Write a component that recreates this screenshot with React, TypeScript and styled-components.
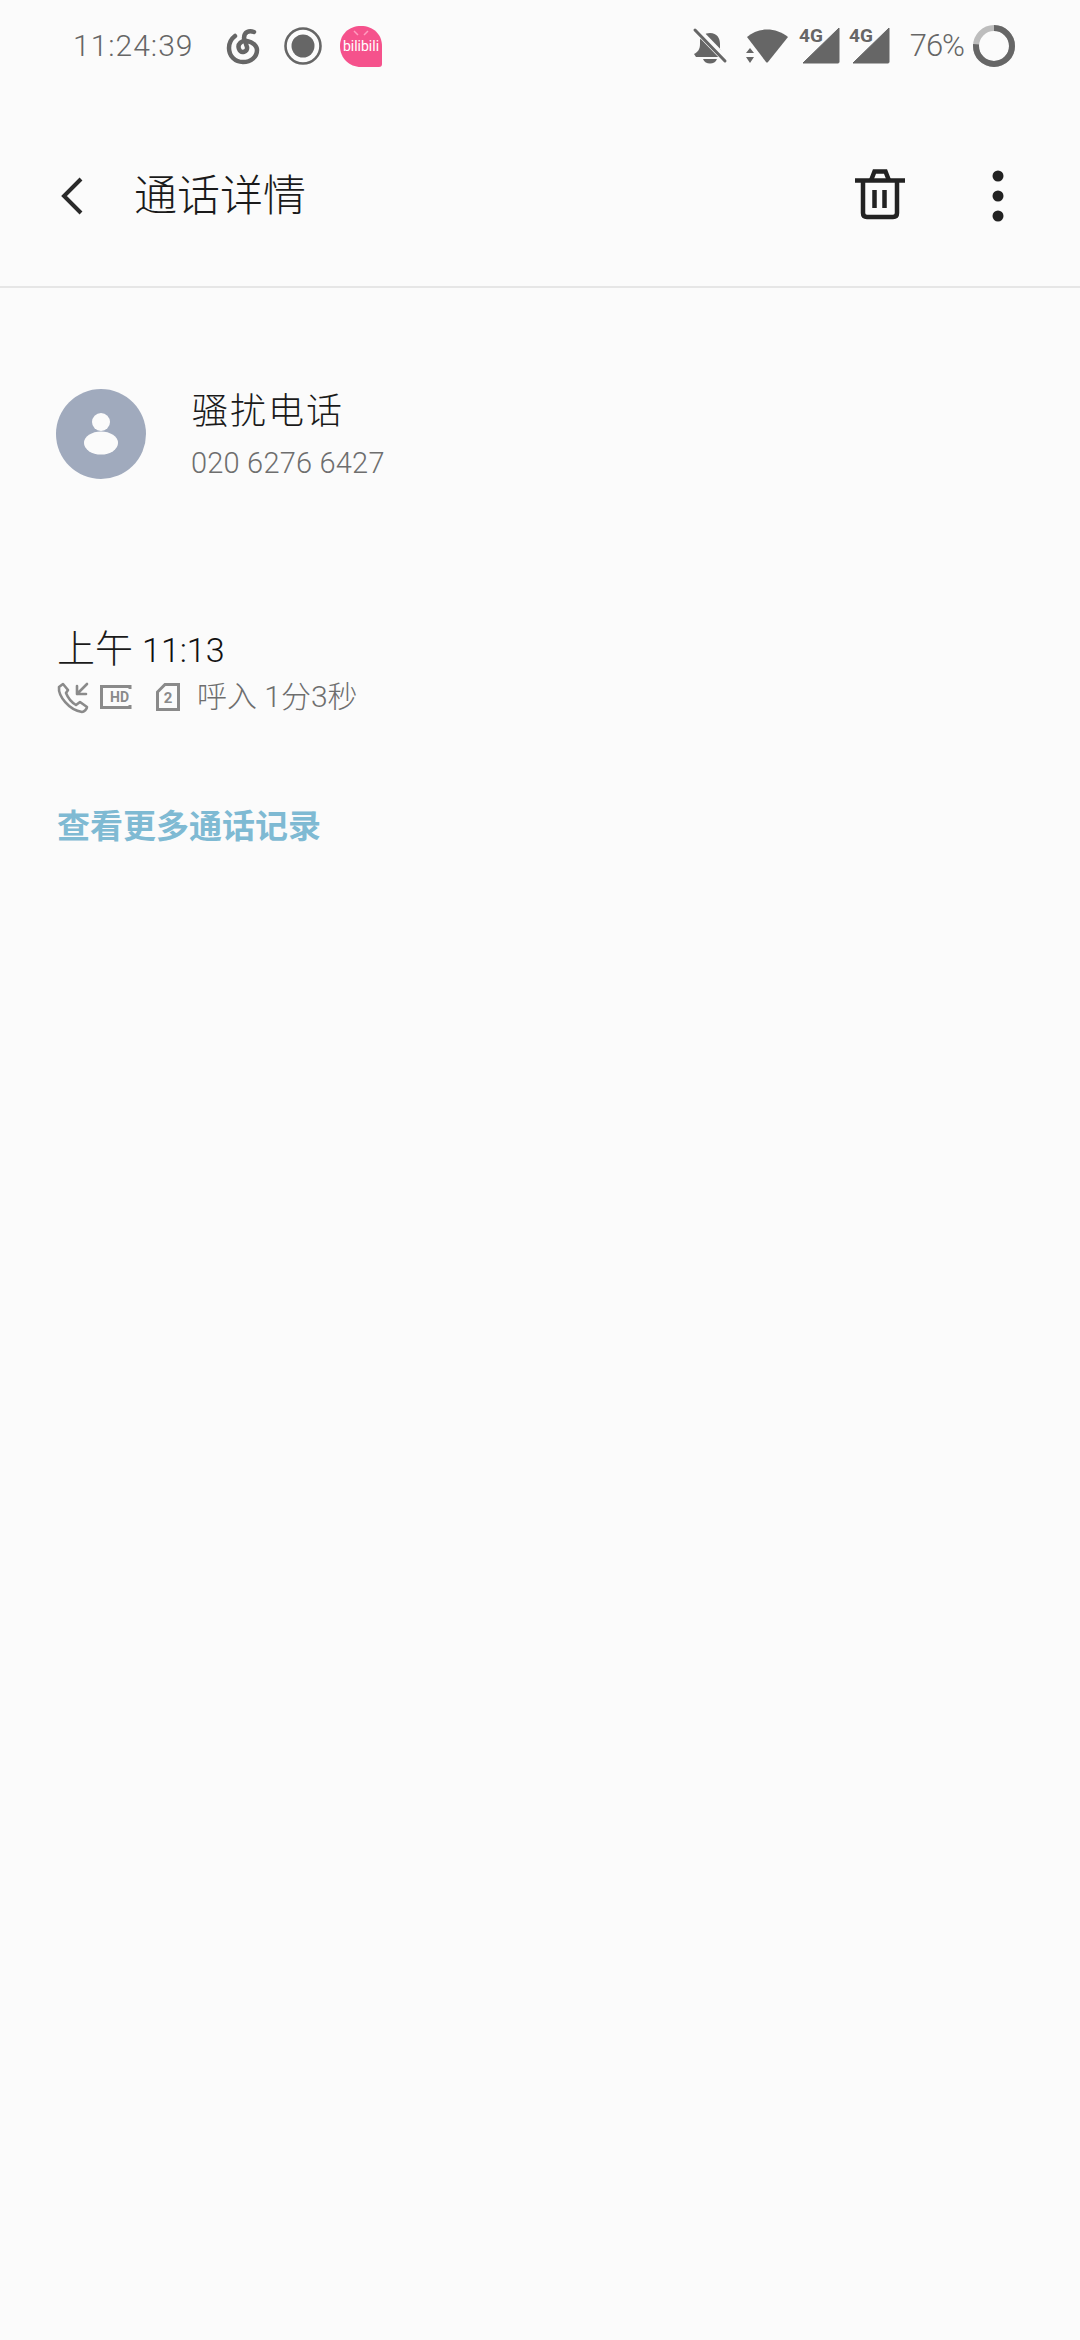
import React from 'react';
import styled, { createGlobalStyle } from 'styled-components';

const GlobalStyle = createGlobalStyle`
  html, body {
    margin: 0;
    padding: 0;
    background: #fbfbfb;
  }
  * {
    box-sizing: border-box;
  }
`;

const FONT = `Roboto, "Noto Sans CJK SC", sans-serif`;

const Page = styled.div`
  width: 1080px;
  height: 2340px;
  background: #fbfbfb;
  font-family: ${FONT};
  overflow: hidden;
`;

const StatusBar = styled.div`
  height: 92px;
  padding: 25px 65px 0 73px;
  display: flex;
  justify-content: space-between;
  align-items: flex-start;
  color: #666;
`;

const StatusGroup = styled.div`
  height: 42px;
  display: flex;
  align-items: center;
`;

const Clock = styled.span`
  width: 152px;
  font-size: 30px;
  font-weight: 300;
  letter-spacing: 1px;
  line-height: 42px;
`;

const Battery = styled.span`
  margin: 0 9px 0 20px;
  font-size: 31px;
  font-weight: 300;
  line-height: 42px;
  letter-spacing: -1px;
`;

const IconSlot = styled.svg<{ $gap?: number }>`
  display: block;
  flex: none;
  overflow: visible;
  margin-right: ${(p) => p.$gap ?? 0}px;
`;

const AppBar = styled.header`
  height: 196px;
  padding: 14px 76px 0 60px;
  display: flex;
  align-items: center;
  border-bottom: 2px solid #e6e6e6;
  color: #222;
`;

const BackButton = styled.div`
  width: 74px;
  display: flex;
  align-items: center;
`;

const Title = styled.h1`
  flex: 1;
  margin: 0;
  font-size: 43px;
  font-weight: 300;
  line-height: 56px;
  color: #1a1a1a;
`;

const Contact = styled.section`
  margin-top: 101px;
  padding-left: 56px;
  display: flex;
  align-items: flex-start;
`;

const Avatar = styled.div`
  width: 90px;
  height: 90px;
  border-radius: 50%;
  background: #a0aabd;
  display: flex;
  align-items: center;
  justify-content: center;
`;

const ContactText = styled.div`
  margin-left: 45px;
  display: flex;
  flex-direction: column;
`;

const ContactName = styled.div`
  font-size: 36px;
  line-height: 44px;
  font-weight: 300;
  letter-spacing: 2px;
  margin: 1px 0 0 1px;
  color: #1a1a1a;
`;

const ContactNumber = styled.div`
  margin-top: 10px;
  font-size: 29px;
  line-height: 38px;
  font-weight: 300;
  letter-spacing: 0.2px;
  color: #6e6e6e;
`;

const CallEntry = styled.section`
  margin-top: 144px;
  padding-left: 57px;
`;

const CallTime = styled.div`
  font-size: 38px;
  line-height: 46px;
  font-weight: 300;
  color: #1a1a1a;
`;

const CallClock = styled.span`
  margin-left: 9px;
  font-size: 34px;
  font-weight: 300;
  color: #111;
`;

const CallMeta = styled.div`
  margin-top: 6px;
  height: 36px;
  display: flex;
  align-items: center;
  color: #8a8a8a;
`;

const CallMetaText = styled.span`
  margin-left: 17px;
  font-size: 30px;
  line-height: 36px;
  font-weight: 300;
  color: #6e6e6e;
`;

const MoreLink = styled.a`
  display: block;
  margin: 90px 0 0 57px;
  font-size: 33px;
  line-height: 44px;
  font-weight: 700;
  color: #7fbad3;
`;

const SignalSpacer = styled.span`
  width: 9px;
`;

const StatusLeft = () => (
  <StatusGroup>
    <Clock>11:24:39</Clock>
    {/* music app swirl */}
    <IconSlot $gap={23} width="36" height="38" viewBox="0 0 36 38" fill="none" stroke="#666" strokeWidth="4.500" strokeLinecap="round">
      <path d="M29 5 C24 3 19 5 19 11 L22 20 C23 25 16 27 14 22 C12 17 17 13 22 14 C28 15 32 19 32 23 C32 30 26 35 18 35 C10 35 4 29 4 21 C4 16 6 12 10 9" />
    </IconSlot>
    <IconSlot $gap={18} width="38" height="38" viewBox="0 0 38 38">
      <circle cx="19" cy="19" r="17.5" fill="none" stroke="#666" strokeWidth="2.6" />
      <circle cx="19" cy="19" r="11.5" fill="#666" />
    </IconSlot>
    {/* pink app badge */}
    <IconSlot width="43" height="43" viewBox="0 0 43 43">
      <path d="M21 1 C33 1 42 9 42 21 L42 39 Q42 42 39 42 L21 42 C9 42 0 33 0 21 C0 9 9 1 21 1 Z" fill="#f5528c" />
      <path d="M14 6 L18 10 M28 6 L24 10" stroke="#ff9dbf" strokeWidth="1.500" />
      <text x="21" y="26" textAnchor="middle" fontSize="14" fontFamily="Roboto, sans-serif" fontWeight="400" fill="#fff">bilibili</text>
    </IconSlot>
  </StatusGroup>
);

const Signal = () => (
  <IconSlot width="41" height="42" viewBox="0 0 41 42">
    <path d="M40 3 L40 37 Q40 38 39 38 L4 38 Z" fill="#666" stroke="#666" strokeWidth="1" strokeLinejoin="round" />
    <text x="0" y="17" fontSize="19" fontWeight="700" fontFamily="Roboto, sans-serif" fill="#666">4G</text>
  </IconSlot>
);

const StatusRight = () => (
  <StatusGroup>
    <IconSlot $gap={18} width="35" height="36" viewBox="0 0 35 36">
      <path d="M17 5 C24 5 27 10 27 16 L27 21 L33 29 L3 29 L1 26 C5 24 7 21 7 16 L7 12 C8 8 12 5 17 5 Z" fill="#666" />
      <path d="M10 31 L24 31 C22 37 12 37 10 31 Z" fill="#666" />
      <path d="M3 1 L35 34" stroke="#fbfbfb" strokeWidth="7" />
      <path d="M2 2 L32 33" stroke="#666" strokeWidth="3" strokeLinecap="round" />
    </IconSlot>
    <IconSlot $gap={10} width="43" height="36" viewBox="0 0 43 36">
      <path d="M1 9 C12 -1 30 -1 42 9 L22 34 Q21 35 20 34 Z" fill="#666" />
      <path d="M4 20 L8 25 L0 25 Z M4 35 L0 29 L8 29 Z" fill="#666" />
    </IconSlot>
    <Signal />
    <SignalSpacer />
    <Signal />
    <Battery>76%</Battery>
    <IconSlot width="42" height="42" viewBox="0 0 42 42">
      <circle cx="21" cy="21" r="18" fill="none" stroke="#bdbdbd" strokeWidth="6" />
      <circle cx="21" cy="21" r="18" fill="none" stroke="#666" strokeWidth="6" strokeDasharray="86 113" transform="rotate(-90 21 21)" />
    </IconSlot>
  </StatusGroup>
);

export default function App() {
  return (
    <Page>
      <GlobalStyle />
      <StatusBar>
        <StatusLeft />
        <StatusRight />
      </StatusBar>
      <AppBar>
        <BackButton>
          <IconSlot width="24" height="38" viewBox="0 0 24 38" fill="none" stroke="#2a2a2a" strokeWidth="4">
            <path d="M21 2 L4 19 L21 36" />
          </IconSlot>
        </BackButton>
        <Title>通话详情</Title>
        <IconSlot $gap={87} width="50" height="52" viewBox="0 0 50 52" fill="none" stroke="#222" strokeWidth="4.500">
          <path d="M0 10.500 L50 10.500" />
          <path d="M8 10.500 L8 43 Q8 47 12 47 L38 47 Q42 47 42 43 L42 10.500" />
          <path d="M16 10.500 L19.500 1.500 L30.500 1.500 L34 10.500" />
          <path d="M19.500 20 L19.500 38 M29.500 20 L29.500 38" />
        </IconSlot>
        <IconSlot width="12" height="52" viewBox="0 0 12 52" fill="#222">
          <circle cx="6" cy="6" r="5.500" />
          <circle cx="6" cy="26" r="5.500" />
          <circle cx="6" cy="46" r="5.500" />
        </IconSlot>
      </AppBar>
      <Contact>
        <Avatar>
          <IconSlot width="34" height="42" viewBox="0 0 34 42" fill="#fbfbfb">
            <circle cx="17" cy="9" r="9" />
            <ellipse cx="17" cy="30" rx="17" ry="11.500" />
          </IconSlot>
        </Avatar>
        <ContactText>
          <ContactName>骚扰电话</ContactName>
          <ContactNumber>020 6276 6427</ContactNumber>
        </ContactText>
      </Contact>
      <CallEntry>
        <CallTime>
          上午<CallClock>11:13</CallClock>
        </CallTime>
        <CallMeta>
          <IconSlot $gap={12} width="31" height="31" viewBox="0 0 31 31" fill="none" stroke="#8a8a8a" strokeWidth="2.600" strokeLinejoin="round" strokeLinecap="round">
            <path d="M6 2 L2 5 C1 14 12 28 25 30 C27 30 30 27 30 25 L23 20 L19 23 C14 20 11 16 9 11 L11 8 Z" />
            <path d="M30 2 L20 12 M20 4 L20 12 L29 12" />
          </IconSlot>
          <IconSlot $gap={25} width="31" height="24" viewBox="0 0 31 24" fill="none" stroke="#8a8a8a" strokeWidth="3">
            <path d="M30 4 L30 1.500 L1.500 1.500 L1.500 22.500 L30 22.500 L30 20" />
            <text x="10" y="17" fontSize="14" fontWeight="700" fontFamily="Roboto, sans-serif" fill="#8a8a8a" stroke="none">HD</text>
          </IconSlot>
          <IconSlot width="24" height="28" viewBox="0 0 24 28" fill="none" stroke="#8a8a8a" strokeWidth="3">
            <path d="M9 1.500 L22.500 1.500 L22.500 26.500 L1.500 26.500 L1.500 9 Z" />
            <text x="12" y="20" textAnchor="middle" fontSize="15" fontWeight="700" fontFamily="Roboto, sans-serif" fill="#8a8a8a" stroke="none">2</text>
          </IconSlot>
          <CallMetaText>呼入 1分3秒</CallMetaText>
        </CallMeta>
      </CallEntry>
      <MoreLink>查看更多通话记录</MoreLink>
    </Page>
  );
}
